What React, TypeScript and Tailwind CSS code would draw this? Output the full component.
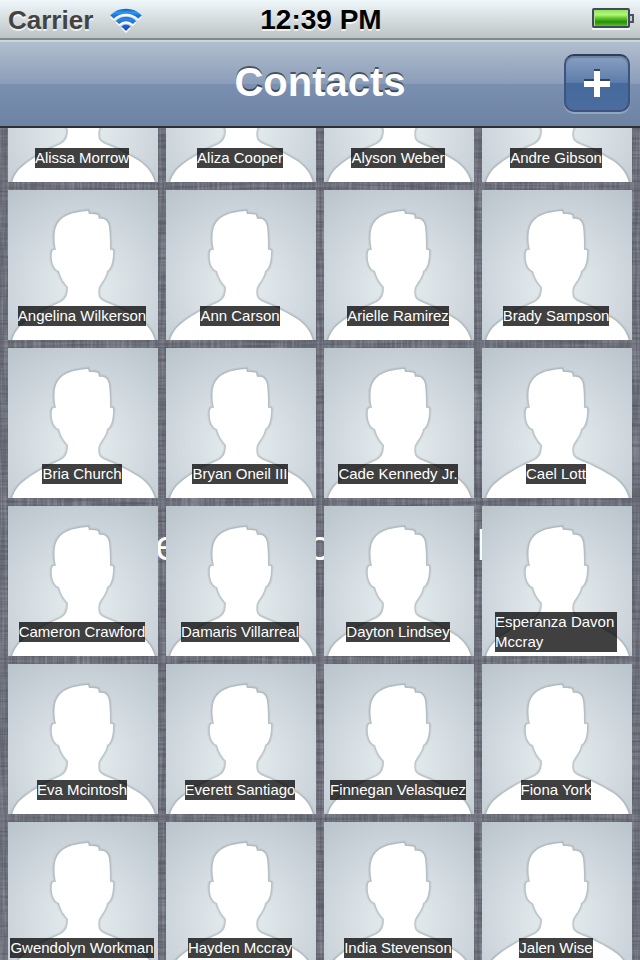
import React from "react";

const contacts = [
  "Alissa Morrow", "Aliza Cooper", "Alyson Weber", "Andre Gibson",
  "Angelina Wilkerson", "Ann Carson", "Arielle Ramirez", "Brady Sampson",
  "Bria Church", "Bryan Oneil III", "Cade Kennedy Jr.", "Cael Lott",
  "Cameron Crawford", "Damaris Villarreal", "Dayton Lindsey", "Esperanza Davon Mccray",
  "Eva Mcintosh", "Everett Santiago", "Finnegan Velasquez", "Fiona York",
  "Gwendolyn Workman", "Hayden Mccray", "India Stevenson", "Jalen Wise",
];

const SILHOUETTE =
  "M4 151C6 143 10 138 15 134C22 128 32 122 42 117L53 112C58 109 60 105 60 97C56 93 53 88 51 81C45 79 43 70 44 62Q45 59 48 60C46 52 46 43 48 37C52 26 64 22 80 21L81 24C85 24 88 24 90 25L91 29C97 28 100 31 101 37C102 46 102 52 102 60Q106 59 105 63C105 71 103 79 99 81C98 88 94 91 91 97C90 100 90 104 91 107C92 110 97 112 102 114C110 117 119 122 126 126C137 132 144 139 147 151Z";

function Linen() {
  return (
    <svg className="absolute inset-0 h-full w-full" aria-hidden="true">
      <filter id="warp" x="0" y="0" width="100%" height="100%" colorInterpolationFilters="sRGB">
        <feTurbulence type="fractalNoise" baseFrequency="0.4 0.02" numOctaves="2" seed="4" />
        <feColorMatrix values="0 0 0 0 0.75  0 0 0 0 0.76  0 0 0 0 0.8  0.8 0 0 0 -0.3" />
      </filter>
      <filter id="weft" x="0" y="0" width="100%" height="100%" colorInterpolationFilters="sRGB">
        <feTurbulence type="fractalNoise" baseFrequency="0.02 0.4" numOctaves="2" seed="9" />
        <feColorMatrix values="0 0 0 0 0.2  0 0 0 0 0.21  0 0 0 0 0.25  0.8 0 0 0 -0.3" />
      </filter>
      <rect width="100%" height="100%" fill="#6b6e79" />
      <rect width="100%" height="100%" filter="url(#warp)" />
      <rect width="100%" height="100%" filter="url(#weft)" />
    </svg>
  );
}

function Tile({ name }: { name: string }) {
  const width = name.length < 20 ? "whitespace-nowrap" : "max-w-[122px]";
  return (
    <li className="relative aspect-square overflow-hidden bg-[radial-gradient(circle_at_50%_65%,#e8eff1_0%,#d2dae0_50%,#b9c3ca_100%)]">
      <svg viewBox="0 0 150 150" className="block h-full w-full" aria-hidden="true">
        <path d={SILHOUETTE} fill="none" stroke="#8c999e" strokeOpacity="0.16" strokeWidth="5" />
        <path d={SILHOUETTE} fill="none" stroke="#8c999e" strokeOpacity="0.3" strokeWidth="3" />
        <path d={SILHOUETTE} fill="#fff" />
      </svg>
      <div className="absolute inset-x-0 bottom-1 flex h-10 items-center justify-center pr-[2px]">
        <span className={`${width} bg-black/75 text-[15px] leading-5 text-white`}>{name}</span>
      </div>
    </li>
  );
}

function Wifi() {
  return (
    <svg viewBox="0 0 34 28" className="h-7 w-[34px]" role="img" aria-label="Wi-Fi">
      <defs>
        <linearGradient id="wifi" gradientUnits="userSpaceOnUse" x1="0" y1="3" x2="0" y2="26">
          <stop offset="0" stopColor="#0f4fae" />
          <stop offset="0.2" stopColor="#2f97ee" />
          <stop offset="0.34" stopColor="#1a6fdc" />
          <stop offset="0.5" stopColor="#2b83e6" />
          <stop offset="1" stopColor="#0a45c8" />
        </linearGradient>
      </defs>
      <g fill="none" stroke="#fff" strokeOpacity="0.9" transform="translate(0 2)">
        <path d="M3 12A20 20 0 0 1 31 12" strokeWidth="5" />
        <path d="M8.500 17.500A12 12 0 0 1 25.500 17.500" strokeWidth="5" />
        <path d="M12.500 21.500A6 6 0 0 1 21.500 21.500L17 26Z" fill="#fff" stroke="none" />
      </g>
      <g fill="none" stroke="url(#wifi)">
        <path d="M3 12A20 20 0 0 1 31 12" strokeWidth="5" />
        <path d="M8.500 17.500A12 12 0 0 1 25.500 17.500" strokeWidth="4.500" />
        <path d="M12.500 21.500A6 6 0 0 1 21.500 21.500L17 26Z" fill="url(#wifi)" stroke="none" />
      </g>
    </svg>
  );
}

function Battery() {
  return (
    <svg viewBox="0 0 42 22" className="h-[22px] w-[42px]" role="img" aria-label="Battery full">
      <defs>
        <linearGradient id="charge" x1="0" y1="0" x2="0" y2="1">
          <stop offset="0" stopColor="#8de855" />
          <stop offset="0.3" stopColor="#b3f67d" />
          <stop offset="0.5" stopColor="#62c92d" />
          <stop offset="0.75" stopColor="#258e08" />
          <stop offset="1" stopColor="#55c526" />
        </linearGradient>
      </defs>
      <path d="M0 20H38V22H0Z" fill="#fff" opacity=".8" />
      <rect x="1" y="1" width="36" height="18" rx="1" fill="#a5dd80" stroke="#434861" strokeWidth="2" />
      <rect x="3" y="2" width="32" height="16" fill="url(#charge)" />
      <path d="M38 7H41V14H38" fill="#c5cbd0" stroke="#4b5063" strokeWidth="2" />
    </svg>
  );
}

export default function App() {
  return (
    <div className="flex h-screen flex-col overflow-hidden bg-[#6b6e79] font-['Liberation_Sans',Arial,sans-serif]">
      <div className="grid h-10 shrink-0 grid-cols-[1fr_auto_1fr] items-center border-b-2 border-[#7f898b] bg-linear-to-b from-[#f0f7fa] to-[#bcc4c5] pr-[6px] pl-2">
        <div className="flex items-center gap-4">
          <span className="pt-[2px] text-[26px] leading-8 font-bold text-[#434343] [text-shadow:0_2px_0_#ffffffb0]">Carrier</span>
          <Wifi />
        </div>
        <span className="pt-[2px] text-[28px] leading-8 font-bold text-black [text-shadow:0_2px_0_#ffffffb0]">12:39 PM</span>
        <div className="flex justify-end">
          <Battery />
        </div>
      </div>
      <header className="grid h-[88px] shrink-0 grid-cols-[1fr_auto_1fr] items-center border-t-2 border-b-2 border-t-[#cdd6df] border-b-[#2d3035] bg-[linear-gradient(#b2bece,#8a9db9_50%,#7b90b0_50%,#6d83a4)] px-[10px] pb-[2px]">
        <h1 className="col-start-2 pb-[2px] text-[40px] leading-[48px] font-bold text-white [text-shadow:0_-2px_0_#00000080]">Contacts</h1>
        <button
          aria-label="Add contact"
          className="flex h-[58px] w-[66px] items-center justify-center justify-self-end rounded-[10px] border-2 border-[#3d557d] border-t-[#2f3f59] bg-[linear-gradient(#88a0c1,#5c7cab_50%,#466a9c_50%,#4a6c9f)] shadow-[0_2px_0_#ffffff40,inset_0_2px_1px_#00000030]"
        >
          <svg viewBox="0 0 26 28" className="h-7 w-[26px]" aria-hidden="true">
            <path d="M10 0H16V10H26V16H0V10H10Z" fill="#35445e" />
            <path d="M10 2H16V12H26V18H16V28H10V18H0V12H10Z" fill="#fff" />
          </svg>
        </button>
      </header>
      <main className="relative min-h-0 flex-1 overflow-hidden">
        <Linen />
        <div className="absolute inset-0 text-[42px] leading-[48px] text-white" aria-hidden="true">
          <span className="absolute top-[394px] left-[155px]">e</span>
          <span className="absolute top-[394px] left-[308px]">o</span>
          <span className="absolute top-[394px] left-[477px]">l</span>
        </div>
        <ul className="relative -mt-24 grid grid-cols-4 gap-2 px-2">
          {contacts.map((name) => (
            <Tile key={name} name={name} />
          ))}
        </ul>
      </main>
    </div>
  );
}
